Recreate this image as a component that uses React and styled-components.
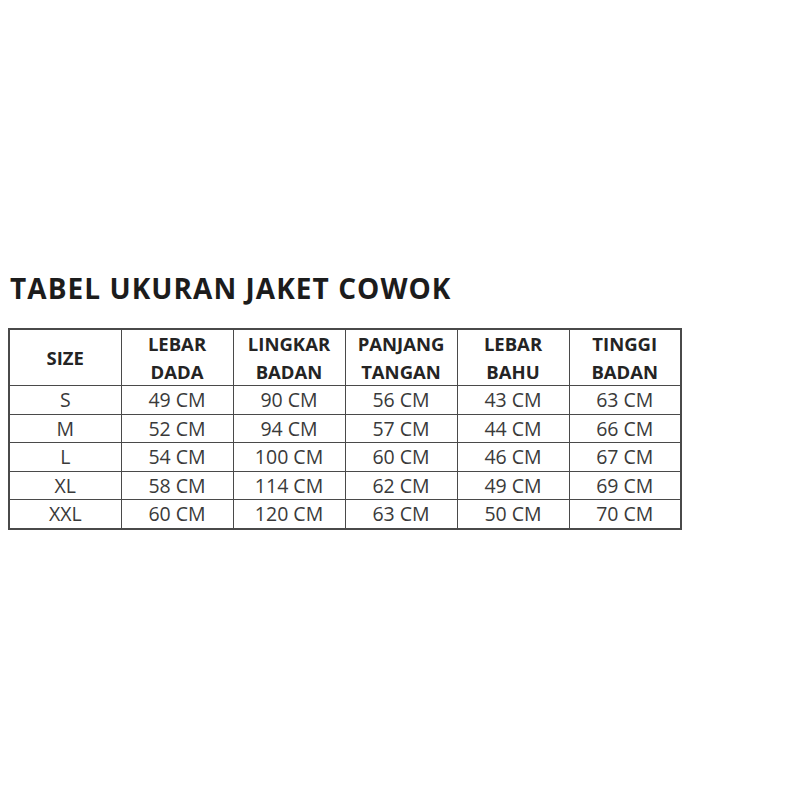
import React from 'react';
import styled, { createGlobalStyle } from 'styled-components';

const GlobalStyle = createGlobalStyle`
    html, body {
        margin: 0;
        padding: 0;
        background: #ffffff;
    }
    body {
        font-family: "Open Sans", "Noto Sans", sans-serif;
    }
`;

//
const Page = styled.div`
    width: 800px;
    height: 800px;
    padding: 270px 0 0 8px;
    box-sizing: border-box;
`;

const Title = styled.h1`
    margin: 0 0 22px 2px;
    font-size: 28px;
    line-height: 36px;
    font-weight: 700;
    color: #1c1c1c;
    letter-spacing: 1.05px;
`;

const Table = styled.table`
    border-collapse: collapse;
    table-layout: fixed;
    width: 674px;
    border: 2px solid #4a4a4a;
`;

const Cell = styled.td`
    border: 1.5px solid #4a4a4a;
    padding: 0;
    text-align: center;
    vertical-align: middle;
    height: ${({ $head }) => ($head ? '54px' : '27.5px')};
    font-size: ${({ $head }) => ($head ? '18.5px' : '19.5px')};
    line-height: ${({ $head }) => ($head ? '27.5px' : '27px')};
    font-weight: ${({ $head }) => ($head ? 700 : 400)};
    color: ${({ $head }) => ($head ? '#242424' : '#3a3a3a')};
    white-space: nowrap;
`;

const heads = [
    ['SIZE'],
    ['LEBAR', 'DADA'],
    ['LINGKAR', 'BADAN'],
    ['PANJANG', 'TANGAN'],
    ['LEBAR', 'BAHU'],
    ['TINGGI', 'BADAN'],
];

const rows = [
    ['S', 49, 90, 56, 43, 63],
    ['M', 52, 94, 57, 44, 66],
    ['L', 54, 100, 60, 46, 67],
    ['XL', 58, 114, 62, 49, 69],
    ['XXL', 60, 120, 63, 50, 70],
];

const App = () => (
    <>
        <GlobalStyle />
        <Page>
            <Title>TABEL UKURAN JAKET COWOK</Title>
            <Table>
                <tbody>
                    <tr>
                        {heads.map((lines, i) => (
                            <Cell $head key={i}>
                                {lines.map((l, j) => (
                                    <React.Fragment key={j}>
                                        {j > 0 && <br />}
                                        {l}
                                    </React.Fragment>
                                ))}
                            </Cell>
                        ))}
                    </tr>
                    {rows.map((row) => (
                        <tr key={row[0]}>
                            {row.map((v, i) => (
                                <Cell key={i}>{i === 0 ? v : `${v} CM`}</Cell>
                            ))}
                        </tr>
                    ))}
                </tbody>
            </Table>
        </Page>
    </>
);

export default App;
